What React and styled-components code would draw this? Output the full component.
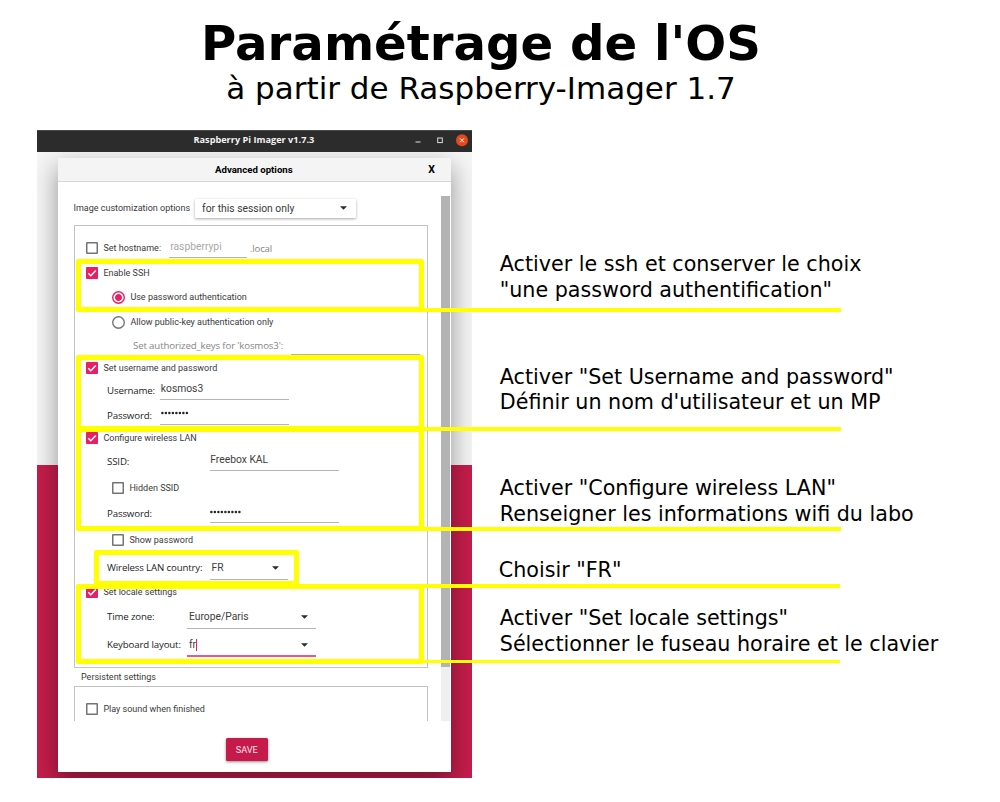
import React from 'react';
import styled, { createGlobalStyle, css } from 'styled-components';

const Global = createGlobalStyle`
  *, *::before, *::after { box-sizing: border-box; }
  body { margin: 0; background: #fff; }
`;

const ui = "Roboto, 'Liberation Sans', sans-serif";
const humanist = "'Open Sans', 'Noto Sans', sans-serif";
const pink = '#e91e63';

const Page = styled.main`
  position: relative;
  width: 1000px;
  height: 802px;
  overflow: hidden;
  font-family: 'DejaVu Sans', sans-serif;
  color: #000;
`;

const Header = styled.header`
  width: 962px;
  height: 130px;
  padding-top: 15px;
  text-align: center;
  white-space: nowrap;
`;

const Title = styled.h1`
  margin: 0;
  font-size: 48.2px;
  line-height: 56px;
  font-weight: 700;
`;

const Subtitle = styled.p`
  margin: 0;
  font-size: 31px;
  line-height: 34px;
`;

const Body = styled.div`
  display: flex;
  padding-left: 37px;
`;

/* Application window */

const Window = styled.section`
  width: 435.4px;
  height: 647.6px;
  overflow: hidden;
  font-family: ${ui};
  font-size: 9px;
  color: #3a3a3a;
  white-space: nowrap;
  background: linear-gradient(#f5f5f5 335px, #c51d4b 335px);
`;

const TitleBar = styled.div`
  position: relative;
  z-index: 1;
  display: flex;
  align-items: center;
  height: 21.5px;
  padding: 0 4.5px 3.4px 156.5px;
  background: #2c2c2c;
  border-top: 1px solid #484848;
  color: #f2f2f2;
`;

const WindowTitle = styled.span`
  flex: 1;
  font: 700 9.17px ${humanist};
`;

const WindowControls = styled.svg`
  display: block;
  width: 54px;
  height: 14px;
`;

const Dialog = styled.div`
  display: flex;
  flex-direction: column;
  width: 393.5px;
  height: 613.5px;
  margin: 6.5px 0 0 20.5px;
  background: #fff;
  box-shadow: 0 10px 23px 1px rgba(0, 0, 0, 0.38);
`;

const DialogHeader = styled.div`
  display: flex;
  align-items: center;
  justify-content: space-between;
  height: 23.5px;
  padding: 1px 16px 0 157.5px;
  background: #f4f4f4;
  border-bottom: 1px solid #d8d8d8;
  font-size: 9.65px;
  font-weight: 700;
  color: #000;
`;

const Close = styled.span`
  font-size: 10.5px;
`;

const Scroller = styled.div`
  display: flex;
  justify-content: space-between;
  height: 539.5px;
  overflow: hidden;
`;

const Settings = styled.div`
  width: 354.5px;
  margin-left: 16px;
`;

const Scrollbar = styled.div`
  width: 9.5px;
  height: 525px;
  margin: 14.5px 1px 0 0;
  background: #efefef;
`;

const Thumb = styled.div`
  height: 471px;
  background: #b3b3b3;
`;

const CustomRow = styled.div`
  display: flex;
  align-items: center;
  gap: 4.5px;
  padding-top: 17px;
`;

const Combo = styled.div`
  display: flex;
  align-items: center;
  justify-content: space-between;
  width: 161.5px;
  height: 19px;
  padding: 0 9px 0 7.5px;
  background: #fff;
  border-radius: 1px;
  box-shadow: 0 1px 3px rgba(0, 0, 0, 0.35);
  font-size: 10.35px;
`;

const Group = styled.div`
  height: ${(p) => p.$height}px;
  margin-top: ${(p) => p.$top}px;
  border: 1px solid #c2c2c2;
`;

const GroupTitle = styled.div`
  margin: 3px 0 0 7.5px;
  line-height: 13px;
`;

const Row = styled.div`
  display: flex;
  align-items: flex-start;
  height: 20px;
  margin-top: ${(p) => p.$gap}px;
  padding-left: ${(p) => p.$indent}px;
  line-height: 20px;
`;

const Check = styled.span`
  flex: none;
  display: flex;
  width: 12px;
  height: 12px;
  margin: 4px 5.4px 0 0;
  box-shadow: inset 0 0 0 1.5px #747474;
  border-radius: 1px;
  ${(p) =>
    p.$on &&
    css`
      box-shadow: none;
      background: ${pink};
    `}
`;

const Radio = styled.span`
  flex: none;
  width: 13px;
  height: 13px;
  margin: 3.5px 5.9px 0 0;
  box-shadow: inset 0 0 0 1.4px ${(p) => (p.$on ? pink : '#747474')};
  border-radius: 50%;
  ${(p) =>
    p.$on &&
    css`
      background: radial-gradient(circle, ${pink} 3px, #fff 3.8px);
    `}
`;

const Label = styled.span`
  flex: none;
  width: ${(p) => p.$width}px;
  padding-top: ${(p) => p.$drop || 0}px;
  color: ${(p) => (p.$muted ? '#868686' : '#3a3a3a')};
`;

const FieldLabel = styled(Label)`
  padding-left: 0.5px;
  font: 500 9.7px/20px ${humanist};
  letter-spacing: -0.15px;
  color: ${(p) => (p.$muted ? '#868686' : '#1c1c1c')};
`;

const Field = styled.span`
  flex: none;
  width: ${(p) => p.$width}px;
  height: 19.5px;
  border-bottom: 1px solid #b5b5b5;
  padding-left: 0.8px;
  font-size: 10.3px;
  line-height: 17px;
  color: ${(p) => (p.$muted ? '#a8a8a8' : '#404040')};
`;

const Picker = styled(Field)`
  display: flex;
  justify-content: space-between;
  align-items: center;
  height: 21.5px;
  padding: 0 8.5px 0 2px;
  line-height: 20px;
  ${(p) =>
    p.$focus &&
    css`
      border-bottom: 2px solid #f0558a;
    `}
`;

const Caret = styled.span`
  display: inline-block;
  width: 1px;
  height: 12px;
  vertical-align: middle;
  background: ${pink};
`;

const Dots = styled.svg`
  display: block;
  height: 17px;
`;

const ArrowIcon = styled.svg`
  flex: none;
  display: block;
  width: 7px;
  height: 4px;
`;

const Save = styled.button`
  width: 41.5px;
  height: 23px;
  margin: 17.4px 0 0 168.5px;
  padding: 0;
  border: 0;
  border-radius: 1.5px;
  background: #c51a4a;
  box-shadow: 0 1px 3px rgba(0, 0, 0, 0.45);
  color: #fbe4ea;
  font: 9.2px ${ui};
`;

/* Notes beside the window */

const Notes = styled.aside`
  margin-left: 27.4px;
  font-size: 20.67px;
  line-height: 25.8px;
  white-space: nowrap;
`;

const Note = styled.p`
  margin: ${(p) => p.$top}px 0 0 ${(p) => p.$shift || 0}px;
`;

/* Yellow marks drawn over the window */

const Frame = styled.div`
  position: absolute;
  left: ${(p) => p.$x}px;
  top: ${(p) => p.$y}px;
  width: ${(p) => p.$w}px;
  height: ${(p) => p.$h}px;
  border: 5px solid #ff0;
  border-radius: 2px;
`;

const Pointer = styled.div`
  position: absolute;
  left: ${(p) => p.$x}px;
  top: ${(p) => p.$y}px;
  width: ${(p) => p.$w}px;
  height: 3.8px;
  background: #ff0;
`;

const Arrow = () => (
  <ArrowIcon viewBox="0 0 7 4">
    <path d="M0 0.2H7L3.5 3.8Z" fill="#2b2b2b" />
  </ArrowIcon>
);

const Checkbox = ({ on }) => (
  <Check $on={on}>
    {on && (
      <svg width="12" height="12" viewBox="0 0 12 12">
        <path d="M2.3 6.2L4.8 8.7L9.8 3.4" fill="none" stroke="#fff" strokeWidth="1.5" />
      </svg>
    )}
  </Check>
);

const CheckRow = ({ on, gap, indent = 11.5, children }) => (
  <Row $gap={gap} $indent={indent}>
    <Checkbox on={on} />
    {children}
  </Row>
);

const Secret = ({ count }) => (
  <Dots width="40" height="17" viewBox="0 0 40 17">
    {Array.from({ length: count }, (_, i) => (
      <circle key={i} cx={1.4 + i * 3.5} cy="8" r="1.25" fill="#222" />
    ))}
  </Dots>
);

const frames = [
  { $x: 76, $y: 259, $w: 348, $h: 53.3 },
  { $x: 76, $y: 355, $w: 348, $h: 76 },
  { $x: 75.5, $y: 426.5, $w: 348.5, $h: 104 },
  { $x: 94, $y: 550.3, $w: 205.3, $h: 36 },
  { $x: 75.5, $y: 583.5, $w: 348, $h: 80 },
];

const pointers = [
  { $x: 422, $y: 308.3, $w: 419.3 },
  { $x: 422, $y: 426.9, $w: 419 },
  { $x: 422, $y: 527, $w: 419 },
  { $x: 296, $y: 584, $w: 544 },
  { $x: 422, $y: 659.5, $w: 418 },
];

export default function App() {
  return (
    <Page>
      <Global />
      <Header>
        <Title>Paramétrage de l'OS</Title>
        <Subtitle>à partir de Raspberry-Imager 1.7</Subtitle>
      </Header>
      <Body>
        <Window>
          <TitleBar>
            <WindowTitle>Raspberry Pi Imager v1.7.3</WindowTitle>
            <WindowControls viewBox="0 0 54 14">
              <path d="M1.5 9H6.5" stroke="#ddd" strokeWidth="1" />
              <rect x="23.7" y="5" width="4.6" height="4.6" fill="none" stroke="#ddd" strokeWidth="1" />
              <circle cx="48" cy="7.3" r="6" fill="#e5491b" />
              <path d="M46 5.3L50 9.3M50 5.3L46 9.3" stroke="#fff" strokeWidth="1" />
            </WindowControls>
          </TitleBar>
          <Dialog>
            <DialogHeader>
              <span>Advanced options</span>
              <Close>X</Close>
            </DialogHeader>
            <Scroller>
              <Settings>
                <CustomRow>
                  <span>Image customization options</span>
                  <Combo>
                    for this session only
                    <Arrow />
                  </Combo>
                </CustomRow>
                <Group $top={7.5} $height={442.5}>
                  <CheckRow gap={12}>
                    <Label $width={66}>Set hostname:</Label>
                    <Field $width={77.5} $muted>raspberrypi</Field>
                    <FieldLabel $width={40} $drop={1} $muted>
                      &nbsp;.local
                    </FieldLabel>
                  </CheckRow>
                  <CheckRow on gap={4.5}>Enable SSH</CheckRow>
                  <Row $gap={4.5} $indent={37}>
                    <Radio $on />
                    Use password authentication
                  </Row>
                  <Row $gap={5} $indent={37}>
                    <Radio />
                    Allow public-key authentication only
                  </Row>
                  <Row $gap={3.5} $indent={58}>
                    <FieldLabel $width={158} $muted>Set authorized_keys for 'kosmos3':</FieldLabel>
                    <Field $width={129} />
                  </Row>
                  <CheckRow on gap={2}>Set username and password</CheckRow>
                  <Row $gap={2.5} $indent={32}>
                    <FieldLabel $width={53.5} $drop={1.2}>Username:</FieldLabel>
                    <Field $width={129}>kosmos3</Field>
                  </Row>
                  <Row $gap={5} $indent={32}>
                    <FieldLabel $width={53.5} $drop={0.8}>Password:</FieldLabel>
                    <Field $width={129}><Secret count={8} /></Field>
                  </Row>
                  <CheckRow on gap={3}>Configure wireless LAN</CheckRow>
                  <Row $gap={3} $indent={32}>
                    <FieldLabel $width={103} $drop={0.8}>SSID:</FieldLabel>
                    <Field $width={129.5}>Freebox KAL</Field>
                  </Row>
                  <CheckRow gap={6.5} indent={37.5}>Hidden SSID</CheckRow>
                  <Row $gap={6} $indent={32}>
                    <FieldLabel $width={103}>Password:</FieldLabel>
                    <Field $width={129.5}><Secret count={9} /></Field>
                  </Row>
                  <CheckRow gap={6.5} indent={37.5}>Show password</CheckRow>
                  <Row $gap={8} $indent={32}>
                    <FieldLabel $width={103}>Wireless LAN country:</FieldLabel>
                    <Picker $width={78}>FR <Arrow /></Picker>
                  </Row>
                  <CheckRow on gap={4}>Set locale settings</CheckRow>
                  <Row $gap={5} $indent={32}>
                    <FieldLabel $width={80.5}>Time zone:</FieldLabel>
                    <Picker $width={129}>Europe/Paris <Arrow /></Picker>
                  </Row>
                  <Row $gap={8} $indent={32}>
                    <FieldLabel $width={80.5}>Keyboard layout:</FieldLabel>
                    <Picker $width={129} $focus>
                      <span>fr<Caret /></span>
                      <Arrow />
                    </Picker>
                  </Row>
                </Group>
                <GroupTitle>Persistent settings</GroupTitle>
                <Group $top={2.4} $height={60}>
                  <CheckRow gap={12}>Play sound when finished</CheckRow>
                </Group>
              </Settings>
              <Scrollbar>
                <Thumb />
              </Scrollbar>
            </Scroller>
            <Save>SAVE</Save>
          </Dialog>
        </Window>
        <Notes>
          <Note $top={122}>Activer le ssh et conserver le choix<br />"une password authentification"</Note>
          <Note $top={61}>Activer "Set Username and password"<br />Définir un nom d'utilisateur et un MP</Note>
          <Note $top={60}>Activer "Configure wireless LAN"<br />Renseigner les informations wifi du labo</Note>
          <Note $top={29.8} $shift={-1}>Choisir "FR"</Note>
          <Note $top={22.6}>Activer "Set locale settings"<br />Sélectionner le fuseau horaire et le clavier</Note>
        </Notes>
      </Body>
      {frames.map((f) => (
        <Frame key={f.$y} {...f} />
      ))}
      {pointers.map((p) => (
        <Pointer key={p.$y} {...p} />
      ))}
    </Page>
  );
}
